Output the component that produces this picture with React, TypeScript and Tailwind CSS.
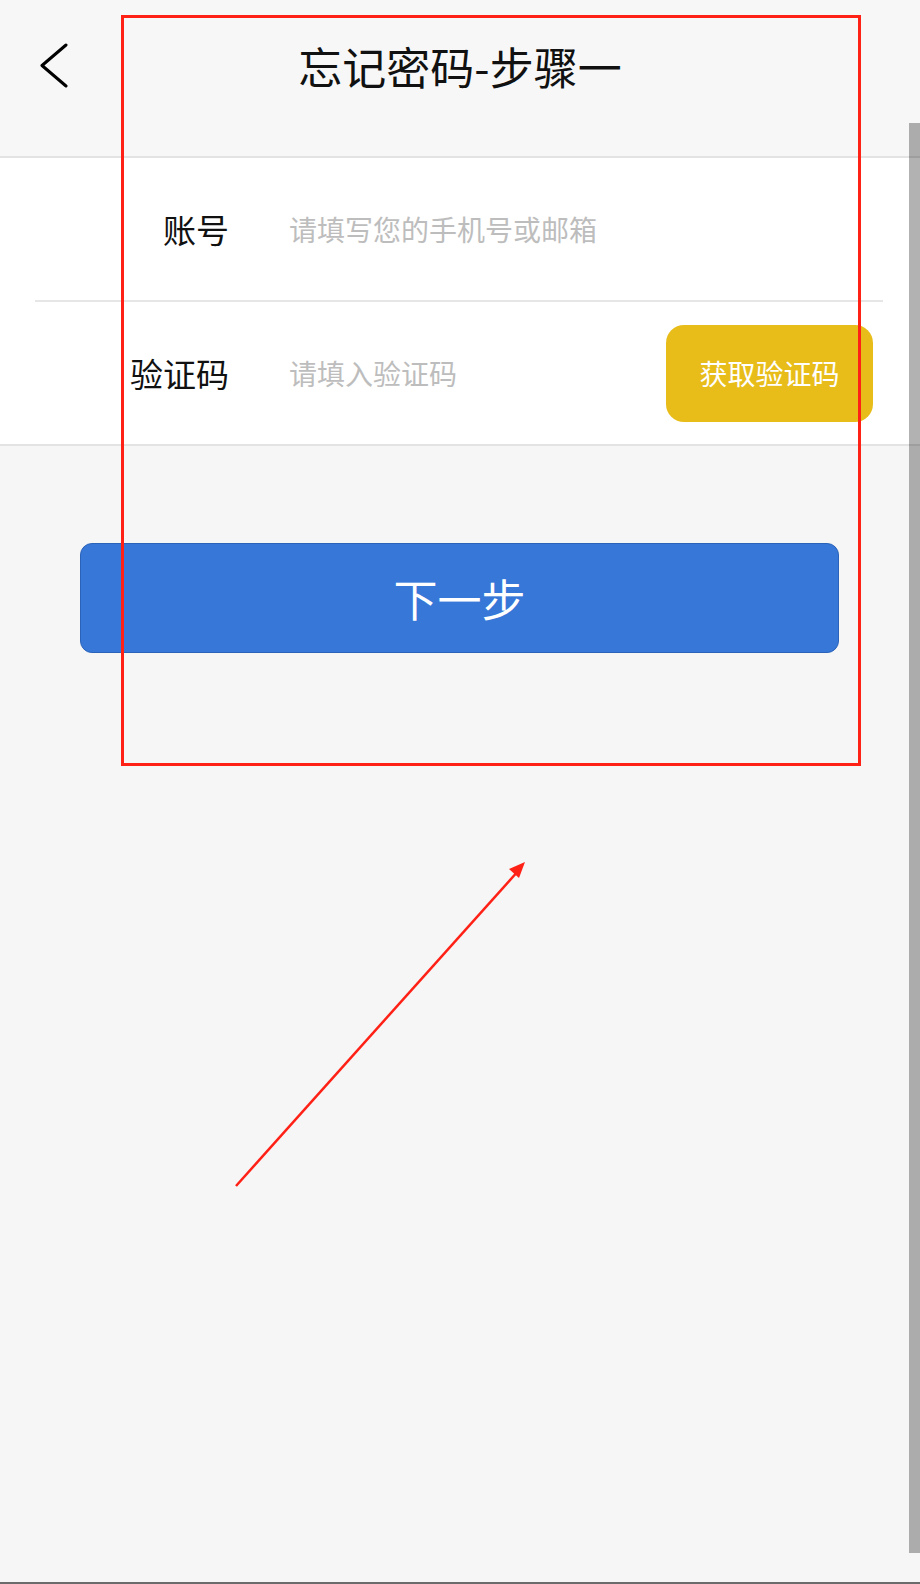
function FieldRow({
  label,
  placeholder,
  action,
  height,
}: {
  label: string;
  placeholder: string;
  action?: string;
  height: string;
}) {
  return (
    <div className={`flex items-center pr-[47px] ${height}`}>
      <label className="w-[229px] shrink-0 text-right text-[33px] leading-none text-[#111]">
        {label}
      </label>
      <input
        className="ml-[60px] min-w-0 flex-1 bg-transparent text-[28px] leading-none text-[#333] outline-none placeholder:text-[#bdbdbd]"
        placeholder={placeholder}
      />
      {action && (
        <button className="flex h-[97px] w-[207px] shrink-0 items-center justify-center rounded-[18px] bg-[#e8bd1a] text-[28px] leading-none text-white">
          {action}
        </button>
      )}
    </div>
  );
}

export default function App() {
  return (
    <div className="relative flex h-[1584px] w-[920px] flex-col overflow-hidden bg-[#f6f6f6] font-['Noto_Sans_CJK_SC','Noto_Sans',sans-serif]">
      <header className="h-[158px] border-b-2 border-[#e3e3e3] bg-[#f7f7f7]">
        <div className="grid h-[132px] grid-cols-[1fr_auto_1fr] items-center">
          <button className="flex items-center pl-[38px]">
            <svg width="32" height="46" viewBox="0 0 32 46" fill="none">
              <polyline
                points="28,2 4,22.5 28,43"
                stroke="#000"
                strokeWidth="3"
                strokeLinecap="round"
                strokeLinejoin="round"
              />
            </svg>
          </button>
          <h1 className="text-[44px] font-normal leading-none text-[#111]">忘记密码-步骤一</h1>
          <div />
        </div>
      </header>

      <section className="border-b-2 border-[#e3e3e3] bg-white">
        <FieldRow label="账号" placeholder="请填写您的手机号或邮箱" height="h-[142px]" />
        <div className="ml-[35px] h-[2px] w-[848px] bg-[#e6e6e6]" />
        <FieldRow label="验证码" placeholder="请填入验证码" action="获取验证码" height="h-[142px]" />
      </section>

      <button className="mr-[81px] ml-[80px] mt-[97px] flex h-[110px] items-center justify-center rounded-[12px] border border-[#2b63b8] bg-[#3677d8] text-[44px] leading-none text-white">
        下一步
      </button>

      <div className="mt-auto h-[2px] bg-[#6b6b6b]" />

      {/* annotation overlay */}
      <div className="pointer-events-none absolute left-[121px] top-[15px] h-[751px] w-[740px] border-[3px] border-[#ff2016]" />
      <svg
        className="pointer-events-none absolute left-0 top-0"
        width="920"
        height="1584"
        viewBox="0 0 920 1584"
      >
        <line x1="236" y1="1186" x2="519" y2="870" stroke="#ff2016" strokeWidth="2.5" />
        <path d="M525 862 L509 869 L519 878 Z" fill="#ff2016" />
      </svg>

      {/* scrollbar */}
      <div className="absolute right-0 top-[123px] h-[1430px] w-[11px] bg-black/30" />
    </div>
  );
}
